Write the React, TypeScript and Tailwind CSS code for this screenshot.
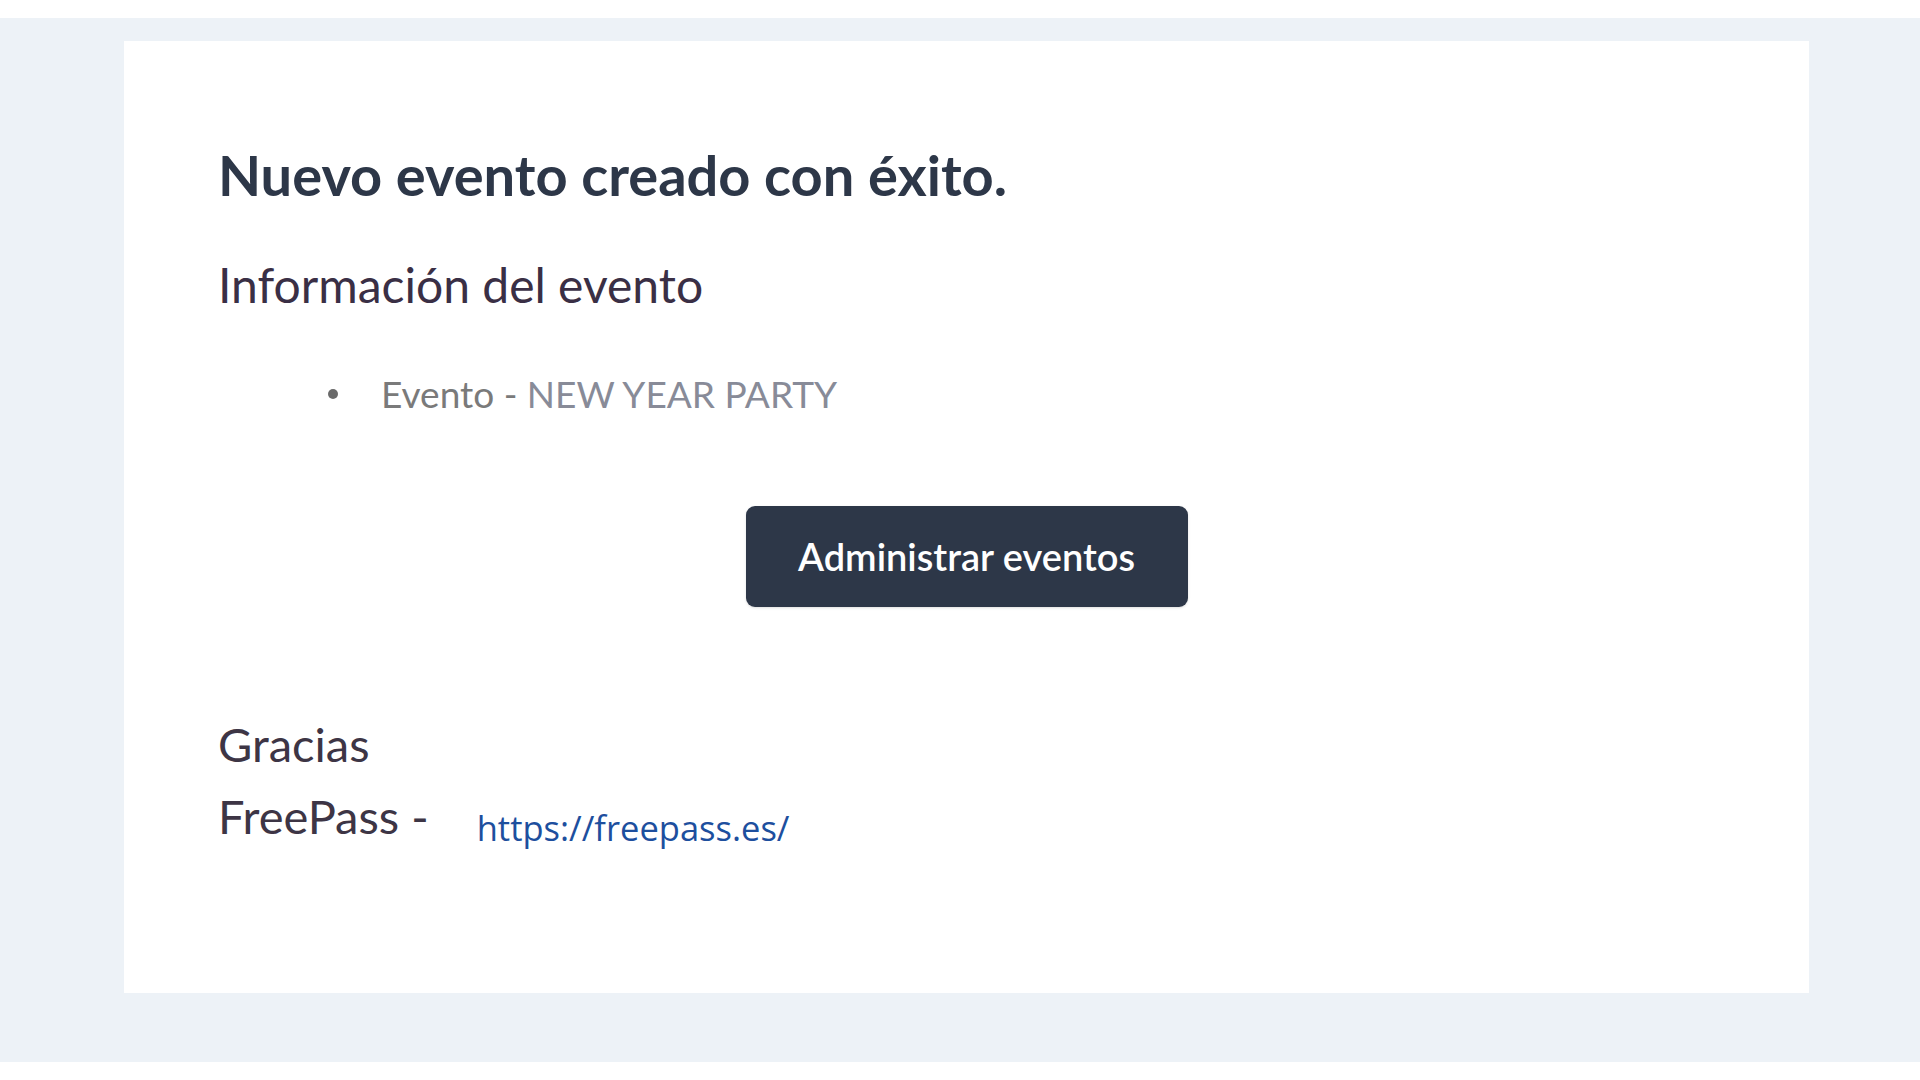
export default function App() {
  return (
    <div className="w-[1920px] h-[1080px] bg-white py-[18px]" style={{ fontFamily: 'Lato, "Noto Sans", sans-serif' }}>
      <div className="h-[1044px] bg-[#edf2f7] pt-[23px] pl-[124px] pr-[111px]">
        <div className="h-[952px] bg-white pt-[100px] pl-[94px] flex flex-col">
          {/* Heading */}
          <h1 className="text-[56px] leading-[1.2] font-bold text-[#2d3748]">
            Nuevo evento creado con éxito.
          </h1>

          <p className="mt-[48px] text-[48px] leading-[1.2] text-[#3a2f45]">Información del evento</p>

          {/* Event details */}
          <div className="mt-[58px] flex items-center pl-[110px] text-[37px] leading-[1.2]">
            <span className="w-[10px] h-[10px] rounded-full bg-[#6a6a6a] mr-[43px]" />
            <span className="text-[#7a7a7a]">
              Evento - <span className="text-[#888b98]">NEW YEAR PARTY</span>
            </span>
          </div>

          <div className="mt-[90px] flex justify-center pr-[94px]">
            <button className="w-[442px] h-[101px] rounded-[9px] bg-[#2d3748] text-white text-[38px] font-semibold shadow-sm flex items-center justify-center">
              Administrar eventos
            </button>
          </div>

          {/* Signature */}
          <div className="mt-[101px] text-[47px] leading-[72px] text-[#3d3545]">
            <p>Gracias</p>
            <div className="flex items-baseline">
              <span>FreePass -</span>
              <a
                href="#"
                className="ml-[48px] translate-y-[7px] text-[34.5px] text-[#1d4f9e]"
                style={{ fontFamily: '"Open Sans", sans-serif' }}
              >
                https://freepass.es/
              </a>
            </div>
          </div>
        </div>
      </div>
    </div>
  )
}
